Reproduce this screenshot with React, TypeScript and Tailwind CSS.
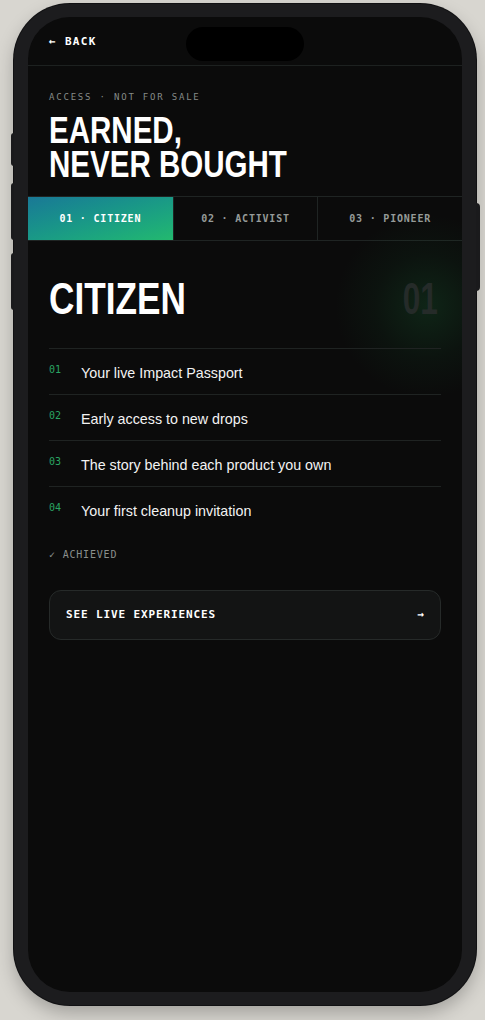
import React from "react";

const mono = { fontFamily: '"DejaVu Sans Mono", "Liberation Mono", monospace' };
const display = { fontFamily: '"Liberation Sans", Arial, sans-serif' };
const sans = { fontFamily: '"Liberation Sans", Arial, sans-serif' };

const perks = [
  "Your live Impact Passport",
  "Early access to new drops",
  "The story behind each product you own",
  "Your first cleanup invitation",
];

const tiers = ["01 · CITIZEN", "02 · ACTIVIST", "03 · PIONEER"];

export default function App() {
  return (
    <div className="min-h-[1020px] w-full bg-[#d8d6d0] pt-[4px] pl-[14px]">
      <div className="relative w-[462px] h-[1001px]">
        {/* side buttons */}
        <div className="absolute left-[-3px] top-[129px] w-[3px] h-[33px] rounded-l bg-[#1a1a1c]" />
        <div className="absolute left-[-3px] top-[179px] w-[3px] h-[57px] rounded-l bg-[#1a1a1c]" />
        <div className="absolute left-[-3px] top-[249px] w-[3px] h-[57px] rounded-l bg-[#1a1a1c]" />
        <div className="absolute right-[-4px] top-[199px] w-[4px] h-[88px] rounded-r bg-[#1a1a1c]" />

        <div className="h-full w-full rounded-[56px] bg-[#1c1c1e] px-[14px] py-[13px] shadow-[0_8px_18px_rgba(0,0,0,0.25)] ring-1 ring-[#111113]">
          <div className="relative h-full w-full overflow-hidden rounded-[42px] bg-[#0b0b0b]">
            {/* dynamic island */}
            <div className="absolute left-[158px] top-[10px] h-[34px] w-[118px] rounded-full bg-black" />

            {/* header */}
            <div className="flex h-[49px] items-center border-b border-[#1d2120] px-[21px] pt-[2px]">
              <span
                className="text-[11px] font-bold tracking-[0.12em] text-white"
                style={mono}
              >
                ← BACK
              </span>
            </div>

            {/* intro */}
            <div className="px-[21px] pt-[25px] pb-[14px]">
              <div
                className="text-[9px] leading-[12px] tracking-[0.2em] text-[#858a88]"
                style={mono}
              >
                ACCESS · NOT FOR SALE
              </div>
              <h1
                className="mt-[11px] origin-left scale-x-[0.82] whitespace-nowrap text-[36px] font-bold leading-[34px] text-white"
                style={display}
              >
                <span className="block">EARNED,</span>
                <span className="block">NEVER BOUGHT</span>
              </h1>
            </div>

            {/* tier tabs */}
            <div className="grid grid-cols-3 border-y border-[#1f2423]">
              {tiers.map((t, i) => (
                <div
                  key={t}
                  className={
                    i === 0
                      ? "flex h-[43px] items-center justify-center bg-gradient-to-br from-[#1a7896] to-[#23b96e] text-white"
                      : "flex h-[43px] items-center justify-center border-l border-[#1f2423] text-[#969b99]"
                  }
                >
                  <span className="text-[10px] font-bold tracking-[0.08em]" style={mono}>
                    {t}
                  </span>
                </div>
              ))}
            </div>

            {/* tier detail */}
            <div className="relative px-[21px]">
              <div className="pointer-events-none absolute right-[-60px] top-[-25px] h-[180px] w-[190px] rounded-full bg-[radial-gradient(circle,rgba(30,140,70,0.2)_0%,rgba(20,100,50,0.09)_40%,rgba(11,11,11,0)_70%)]" />

              <div className="relative flex items-center justify-between pt-[38px] pb-[29px]">
                <h2
                  className="origin-left scale-x-[0.8] text-[44px] font-bold leading-[40px] text-white"
                  style={display}
                >
                  CITIZEN
                </h2>
                <span
                  className="mr-[3px] origin-right scale-x-[0.72] text-[44px] font-bold leading-[40px] text-[#252b29]"
                  style={display}
                >
                  01
                </span>
              </div>

              <ul className="relative">
                {perks.map((p, i) => (
                  <li
                    key={p}
                    className="flex h-[46px] items-start gap-[20px] border-t border-[#1f2322] pt-[15px]"
                  >
                    <span
                      className="w-[12px] text-[10px] leading-[12px] text-[#2aa563]"
                      style={mono}
                    >
                      {`0${i + 1}`}
                    </span>
                    <span
                      className="text-[14.3px] leading-[18px] text-[#f3f3f3]"
                      style={sans}
                    >
                      {p}
                    </span>
                  </li>
                ))}
              </ul>

              <div
                className="mt-[17px] text-[10px] leading-[12px] tracking-[0.08em] text-[#8a8f8d]"
                style={mono}
              >
                ✓ ACHIEVED
              </div>

              <button className="mt-[29px] flex h-[50px] w-full items-center justify-between rounded-[12px] border border-[#262a29] bg-[#131414] px-[16px]">
                <span
                  className="text-[11px] font-bold tracking-[0.08em] text-white"
                  style={mono}
                >
                  SEE LIVE EXPERIENCES
                </span>
                <span className="text-[11px] font-bold text-white" style={mono}>
                  →
                </span>
              </button>
            </div>
          </div>
        </div>
      </div>
    </div>
  );
}
